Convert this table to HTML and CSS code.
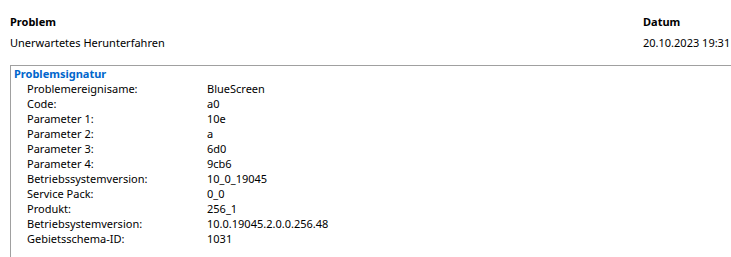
FILE: index.html
```html
<!DOCTYPE html>
<html lang="de">
<head>
<meta charset="utf-8">
<link rel="stylesheet" href="styles.css">
</head>
<body>
<div class="report">
  <div class="summary">
    <div class="col-head">Problem</div>
    <div class="col-head">Datum</div>
    <div class="cell">Unerwartetes Herunterfahren</div>
    <div class="cell">20.10.2023 19:31</div>
  </div>
  <section class="sig">
    <div class="sig-title">Problemsignatur</div>
    <div class="sig-rows">
      <div class="lbl">Problemereignisame:</div><div class="val">BlueScreen</div>
      <div class="lbl">Code:</div><div class="val">a0</div>
      <div class="lbl">Parameter 1:</div><div class="val">10e</div>
      <div class="lbl">Parameter 2:</div><div class="val">a</div>
      <div class="lbl">Parameter 3:</div><div class="val">6d0</div>
      <div class="lbl">Parameter 4:</div><div class="val">9cb6</div>
      <div class="lbl">Betriebssystemversion:</div><div class="val">10_0_19045</div>
      <div class="lbl">Service Pack:</div><div class="val">0_0</div>
      <div class="lbl">Produkt:</div><div class="val">256_1</div>
      <div class="lbl">Betriebsystemversion:</div><div class="val">10.0.19045.2.0.0.256.48</div>
      <div class="lbl">Gebietsschema-ID:</div><div class="val">1031</div>
    </div>
  </section>
</div>
</body>
</html>
```
FILE: styles.css
```css
html, body {
  margin: 0;
  padding: 0;
  background: #ffffff;
}
body {
  font-family: "Noto Sans", "Open Sans", sans-serif;
  font-size: 11px;
  line-height: 15px;
  color: #000000;
  width: 731px;
  height: 257px;
  overflow: hidden;
}
.report {
  padding-top: 14px;
  padding-left: 10px;
}
.summary {
  display: grid;
  grid-template-columns: 633px max-content;
  row-gap: 6px;
  white-space: nowrap;
}
.col-head {
  font-weight: bold;
}
.sig {
  margin-top: 15px;
  border-top: 1px solid #a0a0a0;
  border-left: 1px solid #a0a0a0;
  height: 200px;
}
.sig-title {
  color: #0066cc;
  font-weight: bold;
  padding-left: 3px;
}
.sig-rows {
  display: grid;
  grid-template-columns: 180px 1fr;
  padding-left: 16px;
  white-space: nowrap;
}
```
